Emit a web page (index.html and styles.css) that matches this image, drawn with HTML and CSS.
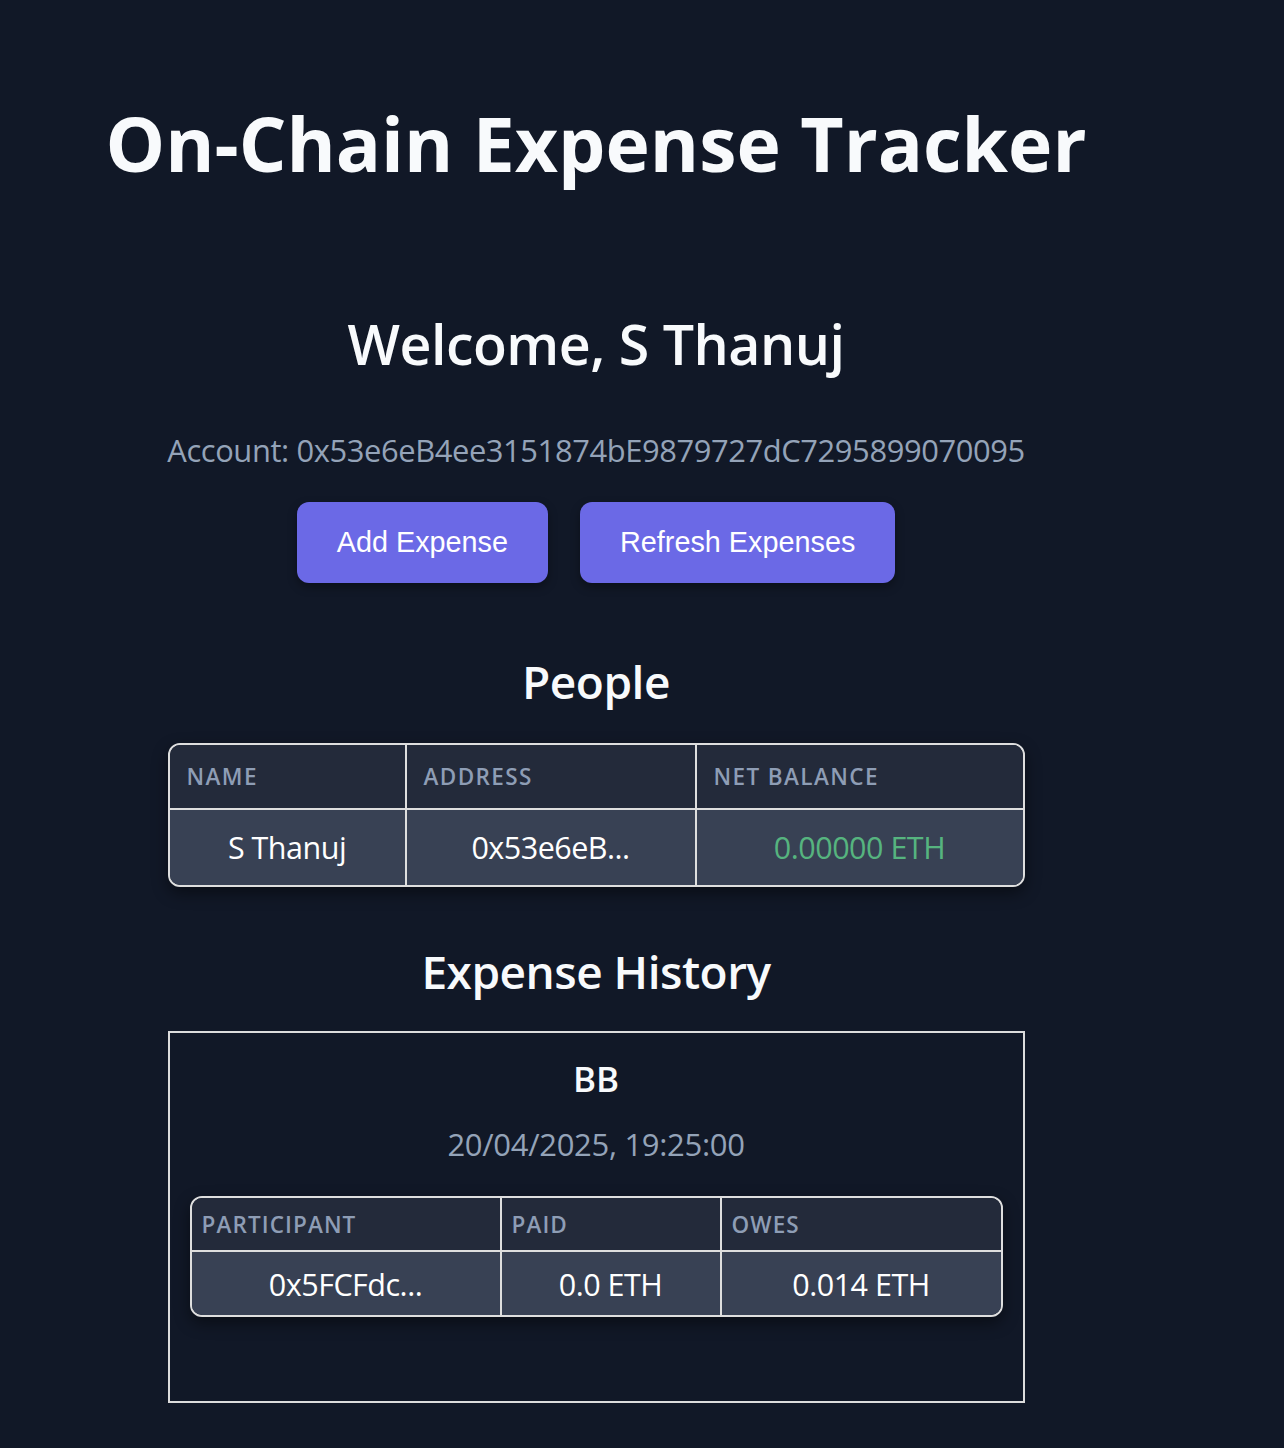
FILE: index.html
```html
<!DOCTYPE html>
<html lang="en">
<head>
<meta charset="utf-8">
<title>On-Chain Expense Tracker</title>
<link rel="stylesheet" href="styles.css">
</head>
<body>
<div class="page">
  <h1 class="title">On-Chain Expense Tracker</h1>
  <div class="main">
    <h2 class="welcome">Welcome, S Thanuj</h2>
    <p class="account">Account: 0x53e6eB4ee3151874bE9879727dC7295899070095</p>
    <div class="actions">
      <button class="btn btn-add">Add Expense</button>
      <button class="btn btn-refresh">Refresh Expenses</button>
    </div>

    <h2 class="section-title people-title">People</h2>
    <div class="table-wrap people-wrap">
      <table class="grid people">
        <colgroup>
          <col class="c-name"><col class="c-addr"><col class="c-bal">
        </colgroup>
        <thead>
          <tr><th>Name</th><th>Address</th><th>Net Balance</th></tr>
        </thead>
        <tbody>
          <tr><td>S Thanuj</td><td>0x53e6eB...</td><td class="positive">0.00000 ETH</td></tr>
        </tbody>
      </table>
    </div>

    <h2 class="section-title history-title">Expense History</h2>
    <div class="expense-card">
      <h3 class="expense-name">BB</h3>
      <p class="expense-date">20/04/2025, 19:25:00</p>
      <div class="table-wrap inner-wrap">
        <table class="grid inner">
          <colgroup>
            <col class="c-part"><col class="c-paid"><col class="c-owes">
          </colgroup>
          <thead>
            <tr><th>Participant</th><th>Paid</th><th>Owes</th></tr>
          </thead>
          <tbody>
            <tr><td>0x5FCFdc...</td><td>0.0 ETH</td><td>0.014 ETH</td></tr>
          </tbody>
        </table>
      </div>
    </div>
  </div>
</div>
</body>
</html>
```
FILE: styles.css
```css
html, body {
  margin: 0;
  padding: 0;
  background: #111827;
}
body {
  font-family: "Open Sans", "Noto Sans", sans-serif;
  color: #f8fafc;
  min-height: 1448px;
}
.page {
  width: 1192px;
  display: flex;
  flex-direction: column;
  align-items: center;
}
.title {
  margin: 98px 0 0;
  font-size: 75px;
  line-height: 1.2;
  font-weight: 700;
  letter-spacing: 0;
  color: #f8fafc;
}
.main {
  width: 857px;
  display: flex;
  flex-direction: column;
  align-items: center;
  text-align: center;
}
.welcome {
  margin: 123px 0 0;
  font-size: 55.5px;
  line-height: 1.2;
  font-weight: 600;
  letter-spacing: -0.5px;
}
.account {
  margin: 54px 0 0;
  font-size: 30.9px;
  line-height: 1.2;
  font-weight: 400;
  color: #94a3b8;
  letter-spacing: -0.4px;
  white-space: nowrap;
}
.actions {
  margin-top: 33px;
  display: flex;
  gap: 32px;
}
.btn {
  font-family: "Liberation Sans", Arial, sans-serif;
  font-size: 28.8px;
  color: #ffffff;
  background: #6b69e6;
  border: none;
  border-radius: 12px;
  height: 81px;
  padding: 0 40px;
  box-shadow: 0 4px 10px rgba(0, 0, 0, 0.35);
  cursor: pointer;
}
.section-title {
  margin: 0;
  font-size: 46px;
  line-height: 1.2;
  font-weight: 600;
  letter-spacing: -0.5px;
}
.people-title {
  margin-top: 71px;
}
.history-title {
  margin-top: 57px;
}
.table-wrap {
  align-self: stretch;
  border: 2px solid #dedede;
  border-radius: 12px;
  overflow: hidden;
  box-shadow: 0 6px 16px rgba(0, 0, 0, 0.45);
}
.people-wrap {
  margin-top: 34px;
}
.grid {
  width: 100%;
  border-collapse: collapse;
  table-layout: fixed;
}
.grid th {
  background: #232a3a;
  color: #8e9db5;
  text-transform: uppercase;
  text-align: left;
  font-weight: 600;
  border-bottom: 2px solid #dedede;
}
.grid td {
  background: #384154;
  color: #ffffff;
  text-align: center;
  font-weight: 400;
}
.grid th + th,
.grid td + td {
  border-left: 2px solid #dedede;
}
.people th {
  height: 63px;
  padding: 0 0 0 17px;
  font-size: 22.5px;
  letter-spacing: 1.4px;
}
.people td {
  height: 75px;
  padding: 0;
  font-size: 30.5px;
  letter-spacing: -0.5px;
}
.c-name { width: 236px; }
.c-addr { width: 290px; }
.c-bal { width: auto; }
.positive {
  color: #56b47f !important;
}
.expense-card {
  align-self: stretch;
  margin-top: 32px;
  border: 2px solid #dcdcdc;
  padding: 25px 20px 84px;
  display: flex;
  flex-direction: column;
  align-items: center;
}
.expense-name {
  margin: 0;
  font-size: 35px;
  line-height: 1.2;
  font-weight: 600;
}
.expense-date {
  margin: 26px 0 0;
  font-size: 31px;
  line-height: 1.2;
  color: #94a3b8;
  letter-spacing: -0.3px;
}
.inner-wrap {
  margin-top: 33px;
}
.inner th {
  height: 52px;
  padding: 0 0 0 10px;
  font-size: 22.5px;
  letter-spacing: 1.1px;
}
.inner td {
  height: 63px;
  padding: 0;
  font-size: 30.5px;
  letter-spacing: -0.5px;
}
.c-part { width: 309px; }
.c-paid { width: 220px; }
.c-owes { width: auto; }
```
